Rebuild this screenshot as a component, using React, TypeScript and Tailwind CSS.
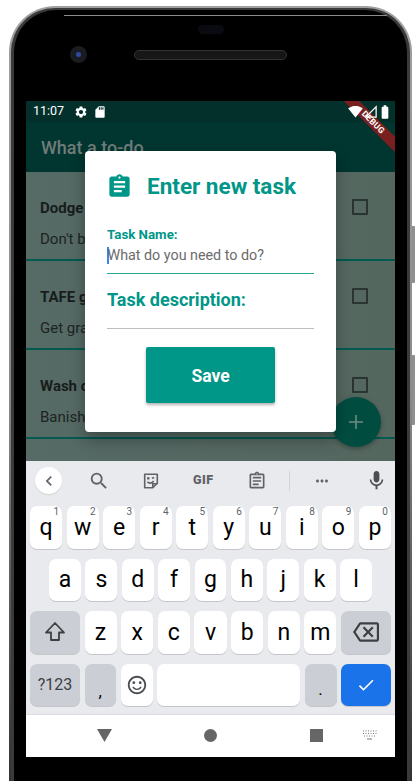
import {
  MdAssignment,
  MdBatteryFull,
  MdCheck,
  MdChevronLeft,
  MdMic,
  MdMoreHoriz,
  MdOutlineAssignment,
  MdOutlineBackspace,
  MdOutlineSentimentSatisfied,
  MdSdCard,
  MdSearch,
  MdSettings,
  MdSignalCellularNull,
  MdSignalWifi4Bar,
} from "react-icons/md";
import type { ReactNode } from "react";

const tasks = [
  { title: "Dodge", body: "Don't b" },
  { title: "TAFE g", body: "Get gra" },
  { title: "Wash c", body: "Banish" },
];

const topRow = [
  ["q", "1"],
  ["w", "2"],
  ["e", "3"],
  ["r", "4"],
  ["t", "5"],
  ["y", "6"],
  ["u", "7"],
  ["i", "8"],
  ["o", "9"],
  ["p", "0"],
];

function Key({ children, hint, dark }: { children?: ReactNode; hint?: string; dark?: boolean }) {
  return (
    <div
      className={`relative flex flex-1 items-center justify-center rounded-[7px] text-[23px] leading-none text-black shadow-[0_1px_0_#c4c6ca] ${
        dark ? "bg-[#cbced4]" : "bg-white"
      }`}
    >
      {children}
      {hint && <span className="absolute right-[3px] top-[1px] text-[10px] text-[#5f6368]">{hint}</span>}
    </div>
  );
}

function SideKey({ children, className }: { children: ReactNode; className: string }) {
  return (
    <div className={`flex w-[50px] shrink-0 items-center justify-center rounded-[7px] shadow-[0_1px_0_#c4c6ca] ${className}`}>
      {children}
    </div>
  );
}

function TaskRow({ title, body }: { title: string; body: string }) {
  return (
    <div className="flex h-[89px] shrink-0 border-b-2 border-[#005a50] pl-[14px] pr-[27px]">
      <div className="flex flex-1 flex-col pt-[26px]">
        <span className="text-[15px] font-bold leading-[20px] text-[#171d1b]">{title}</span>
        <span className="mt-[11px] text-[15px] leading-[20px] text-[#1c2422]">{body}</span>
      </div>
      <div className="mt-[27px] h-[16px] w-[16px] rounded-[1px] border-2 border-[#2a3533]" />
    </div>
  );
}

export default function App() {
  return (
    <div className="h-[781px] w-[417px] overflow-hidden bg-white font-['Roboto',sans-serif]">
      <div className="relative ml-[9px] mt-[6px] h-[775px] w-[403px]">
        {/* volume + power buttons */}
        <div className="absolute -right-[3px] top-[220px] h-[57px] w-[4px] rounded-r-[1px] bg-[#8f8f8f]" />
        <div className="absolute -right-[3px] top-[349px] h-[70px] w-[4px] rounded-r-[1px] bg-[#8f8f8f]" />

        <div className="relative h-full rounded-t-[46px] bg-gradient-to-b from-[#a0a0a0] via-[#8a8a8a] to-[#333333] px-[2px] pt-[2px]">
          <div className="h-full rounded-t-[44px] bg-[#3a3a3a] px-[3px] pt-[2px]">
            <div className="flex h-full flex-col rounded-t-[42px] bg-black px-[12px]">
              {/* bezel */}
              <div className="relative flex h-[91px] shrink-0 flex-col items-center pt-[15px]">
                <div className="absolute left-[38px] right-[8px] top-[5px] h-px bg-[#8c8c8c]" />
                <div className="h-[9px] w-[26px] rounded-full bg-[#0a0b10]" />
                <div className="mt-[12px] flex w-full items-center pl-[44px]">
                  <div className="flex h-[17px] w-[17px] items-center justify-center rounded-full bg-[#1b1c22]">
                    <div className="h-[5px] w-[5px] rounded-full bg-[#2f4aa0]" />
                  </div>
                  <div className="ml-[47px] h-[10px] w-[153px] shrink-0 rounded-full border border-[#333333] bg-[#161616]" />
                </div>
              </div>

              {/* screen */}
              <div className="relative flex h-[656px] w-[369px] shrink-0 flex-col overflow-hidden">
                <div className="relative flex h-[360px] shrink-0 flex-col">
                  <div className="flex h-[21px] shrink-0 items-center bg-[#03302b] pl-[7px] pr-[2px] text-white">
                    <span className="text-[12.5px] leading-none">11:07</span>
                    <MdSettings className="ml-[10px] text-[14px]" />
                    <MdSdCard className="ml-[5px] text-[14px]" />
                    <div className="relative z-10 ml-auto flex items-center">
                      <MdSignalWifi4Bar className="text-[15px]" />
                      <MdSignalCellularNull className="text-[15px]" />
                      <MdBatteryFull className="-ml-[1px] text-[16px]" />
                    </div>
                  </div>
                  <div className="flex h-[50px] shrink-0 items-center bg-[#01352f] pl-[15px] shadow-[0_2px_4px_rgba(0,0,0,0.3)]">
                    <span className="text-[18px] font-medium text-[#6f7c79]">What a to-do</span>
                  </div>
                  <div className="flex-1 bg-gradient-to-r from-[#566a66] to-[#54675f]">
                    {tasks.map((task) => (
                      <TaskRow key={task.title} title={task.title} body={task.body} />
                    ))}
                  </div>

                  {/* fab */}
                  <div className="absolute left-[305px] top-[296px] flex h-[50px] w-[50px] items-center justify-center rounded-full bg-[#004d40] shadow-[0_2px_5px_rgba(0,0,0,0.3)]">
                    <svg width="16" height="16" viewBox="0 0 16 16" className="text-[#6f8a84]">
                      <path d="M8 1v14M1 8h14" stroke="currentColor" strokeWidth="1.6" />
                    </svg>
                  </div>

                  {/* dialog */}
                  <div className="absolute left-[59px] top-[50px] flex h-[281px] w-[251px] flex-col rounded-[4px] bg-white px-[22px] shadow-[0_8px_16px_rgba(0,0,0,0.3)]">
                    <div className="mt-[20px] flex items-center">
                      <MdAssignment className="-ml-[1px] text-[27px] text-[#009688]" />
                      <span className="ml-[14px] whitespace-nowrap text-[22.5px] font-bold leading-[30px] text-[#009688]">Enter new task</span>
                    </div>
                    <span className="mt-[26px] text-[13.3px] font-bold leading-[16px] text-[#009688]">Task Name:</span>
                    <div className="mt-[2px] flex h-[20px] items-center">
                      <span className="-mr-[1px] h-[17px] w-[1.5px] bg-[#3b82f6]" />
                      <span className="whitespace-nowrap text-[14.3px] leading-[20px] text-[#6b6b6b]">What do you need to do?</span>
                    </div>
                    <div className="mt-[8px] h-[1px] bg-[#26a69a]" />
                    <span className="mt-[15px] text-[18px] font-bold leading-[22px] text-[#009688]">Task description:</span>
                    <div className="mt-[17px] h-[1px] bg-[#bdbdbd]" />
                    <button className="mx-auto mt-[18px] flex h-[56px] w-[129px] shrink-0 items-center justify-center rounded-[2px] bg-[#009688] pt-[2px] text-[17.5px] font-bold text-white shadow-[0_2px_3px_rgba(0,0,0,0.3)]">
                      Save
                    </button>
                  </div>
                </div>

                {/* keyboard */}
                <div className="flex h-[254px] shrink-0 flex-col border-b border-[#d9dbde] bg-[#e8eaed] px-[4px] pb-[8px]">
                  <div className="mb-[6px] flex h-[39px] shrink-0 items-center text-[#5f6368]">
                    <div className="ml-[5px] flex h-[27px] w-[27px] items-center justify-center rounded-full bg-white shadow-[0_1px_1px_#cfd1d4]">
                      <MdChevronLeft className="text-[20px]" />
                    </div>
                    <MdSearch className="ml-[26px] text-[22px]" />
                    <svg viewBox="0 0 20 20" className="ml-[32px] h-[18px] w-[18px]" fill="none" stroke="currentColor" strokeWidth="1.8">
                      <path d="M3 2.5h14v10l-5 5H3z" strokeLinejoin="round" />
                      <path d="M12 17v-4h5M6 11c2 2 5 2 7-1" />
                      <circle cx="7" cy="7" r="0.6" fill="currentColor" />
                      <path d="M11 7l2.5-1" />
                    </svg>
                    <span className="ml-[33px] text-[12.5px] font-black tracking-[0.5px]">GIF</span>
                    <MdOutlineAssignment className="ml-[33px] text-[20px]" />
                    <div className="ml-[22px] h-[20px] w-px bg-[#d3d5d9]" />
                    <MdMoreHoriz className="ml-[23px] text-[18px]" />
                    <MdMic className="ml-[34px] text-[23px] text-[#4a4d51]" />
                  </div>

                  <div className="flex flex-1 flex-col gap-[10px]">
                    <div className="flex flex-1 gap-[4.5px]">
                      {topRow.map(([letter, hint]) => (
                        <Key key={letter} hint={hint}>
                          {letter}
                        </Key>
                      ))}
                    </div>
                    <div className="flex flex-1 gap-[4.5px] px-[19px]">
                      {"asdfghjkl".split("").map((letter) => (
                        <Key key={letter}>{letter}</Key>
                      ))}
                    </div>
                    <div className="flex flex-1 gap-[4.5px]">
                      <SideKey className="bg-[#cbced4]">
                        <svg width="22" height="22" viewBox="0 0 22 22" fill="none" stroke="#3c4043" strokeWidth="1.8" strokeLinejoin="round">
                          <path d="M11 2 2 11.5h5v7.5h8v-7.5h5z" />
                        </svg>
                      </SideKey>
                      {"zxcvbnm".split("").map((letter) => (
                        <Key key={letter}>{letter}</Key>
                      ))}
                      <SideKey className="bg-[#cbced4]">
                        <MdOutlineBackspace className="text-[26px] text-[#3c4043]" />
                      </SideKey>
                    </div>
                    <div className="flex flex-1 gap-[4.5px]">
                      <SideKey className="bg-[#cbced4] text-[16px] text-[#3c4043]">?123</SideKey>
                      <div className="w-[31.5px] shrink-0">
                        <div className="flex h-full items-end justify-center rounded-[7px] bg-[#cbced4] pb-[6px] text-[17px] leading-none text-black shadow-[0_1px_0_#c4c6ca]">,</div>
                      </div>
                      <div className="flex w-[32px] shrink-0 items-center justify-center rounded-[7px] bg-white shadow-[0_1px_0_#c4c6ca]">
                        <MdOutlineSentimentSatisfied className="text-[22px] text-[#4a4d51]" />
                      </div>
                      <div className="flex-1 rounded-[7px] bg-white shadow-[0_1px_0_#c4c6ca]" />
                      <div className="w-[32px] shrink-0">
                        <div className="flex h-full items-end justify-center rounded-[7px] bg-[#cbced4] pb-[8px] text-[17px] leading-none text-black shadow-[0_1px_0_#c4c6ca]">.</div>
                      </div>
                      <SideKey className="bg-[#1a73e8]">
                        <MdCheck className="text-[20px] text-white" />
                      </SideKey>
                    </div>
                  </div>
                </div>

                {/* nav bar */}
                <div className="flex h-[42px] shrink-0 items-center bg-white pb-[2px]">
                  <svg width="15" height="13" viewBox="0 0 15 13" className="ml-[71px]">
                    <path d="M0 0h15l-7.5 13z" fill="#666666" />
                  </svg>
                  <div className="ml-[92px] h-[13px] w-[13px] rounded-full bg-[#666666]" />
                  <div className="ml-[93px] h-[13px] w-[13px] bg-[#666666]" />
                  <svg width="15" height="10" viewBox="0 0 15 10" className="ml-[39px]">
                    <path d="M1 1h1M3.5 1h1M6 1h1M8.5 1h1M11 1h1M13.5 1h1M1 3.5h1M3.5 3.5h1M6 3.5h1M8.5 3.5h1M11 3.5h1M13.5 3.5h1M2 6h1M4.5 6h1M7 6h1M9.5 6h1M12 6h1" stroke="#777777" />
                    <path d="M5 9h5" stroke="#777777" />
                  </svg>
                </div>

                {/* debug ribbon */}
                <div className="absolute left-[297px] top-[16px] flex h-[11px] w-[100px] rotate-45 items-center justify-center bg-[#7a1f1f] text-[8.5px] font-bold leading-none tracking-[0.2px] text-white">
                  DEBUG
                </div>
              </div>
              <div className="flex-1" />
            </div>
          </div>
        </div>
      </div>
    </div>
  );
}
